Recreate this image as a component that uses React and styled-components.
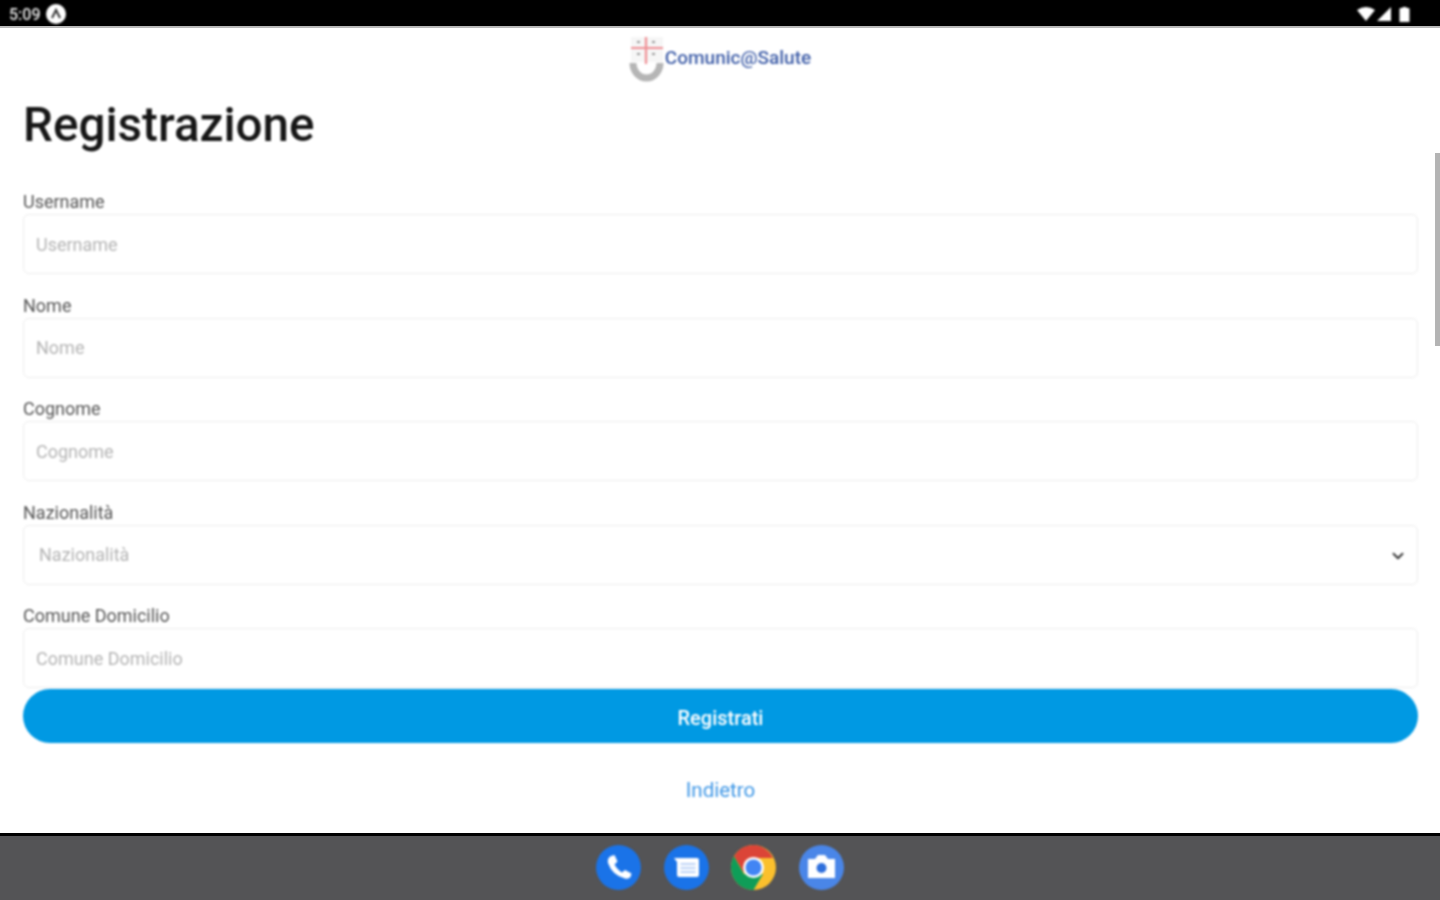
import React from 'react';
import styled, { createGlobalStyle, css } from 'styled-components';
import { ChevronDown } from 'lucide-react';

const GlobalStyle = createGlobalStyle`
  html, body {
    margin: 0;
    padding: 0;
    height: 100%;
    background: #fff;
    font-family: Roboto, "Liberation Sans", sans-serif;
    overflow: hidden;
  }
`;

// the reference is an upscaled low-res capture, everything in it is soft
const soft = css`
  filter: blur(0.8px);
`;

const Screen = styled.div`
  width: 1440px;
  height: 900px;
  display: flex;
  flex-direction: column;
  position: relative;
  overflow: hidden;
`;

const StatusBar = styled.div`
  height: 28px;
  flex: none;
  box-sizing: border-box;
  background: #000;
  border-bottom: 2px solid #b9b9b9;
  display: flex;
  align-items: center;
  justify-content: space-between;
  padding: 2px 30px 0 9px;
  color: #e8e8e8;
  font-size: 16px;
  font-weight: 500;
`;

const StatusLeft = styled.div`
  ${soft}
  display: flex;
  align-items: center;
  gap: 5px;
`;

const StatusRight = styled.div`
  ${soft}
  display: flex;
  align-items: center;
  gap: 2px;
`;

const Content = styled.main`
  ${soft}
  flex: 1;
  min-height: 0;
  display: flex;
  flex-direction: column;
  padding: 0 22px 0 23px;
`;

const LogoRow = styled.div`
  height: 58px;
  flex: none;
  display: flex;
  align-items: center;
  justify-content: center;
`;

const LogoImage = styled.svg`
  width: 38px;
  height: 46px;
  margin-top: 4px;
  margin-left: -2px;
`;

const LogoText = styled.span`
  font-size: 19px;
  font-weight: 500;
  color: #3f5ea8;
  margin-left: -1px;
`;

const Title = styled.h1`
  margin: 14px 0 0;
  height: 50px;
  line-height: 50px;
  font-size: 47.6px;
  font-weight: 500;
  color: #161616;
`;

const Fields = styled.div`
  flex: none;
  height: 539px;
  padding-top: 42px;
  box-sizing: border-box;
  overflow: hidden;
  display: flex;
  flex-direction: column;
  gap: 21.5px;
`;

const Field = styled.div`
  flex: none;
  display: flex;
  flex-direction: column;
`;

const Label = styled.label`
  height: 22px;
  line-height: 20px;
  font-size: 18px;
  color: #555;
`;

const InputBox = styled.div`
  height: 60px;
  box-sizing: border-box;
  border: 1.5px solid #ececec;
  border-radius: 6px;
  display: flex;
  align-items: center;
  justify-content: space-between;
  padding: 0 10px 0 ${(p) => (p.$select ? '15px' : '12px')};
  background: #fff;
  font-size: 18px;
  color: #b4b4b4;
`;

const SelectArrow = styled(ChevronDown)`
  margin-top: 3px;
`;

const SubmitButton = styled.button`
  flex: none;
  height: 54px;
  width: 100%;
  border: none;
  border-radius: 27px;
  padding: 3px 0 0;
  background: #0099e3;
  color: #fff;
  font-family: inherit;
  font-size: 20px;
  font-weight: 500;
`;

const BackLink = styled.a`
  flex: none;
  margin-top: 36px;
  text-align: center;
  font-size: 20.5px;
  line-height: 22px;
  color: #3f97e6;
`;

const Scrollbar = styled.div`
  position: absolute;
  top: 153px;
  right: 0;
  width: 5px;
  height: 193px;
  background: #b4b4b4;
`;

const Dock = styled.nav`
  height: 67px;
  flex: none;
  box-sizing: border-box;
  background: #545456;
  border-top: 3px solid #000;
  padding-bottom: 2px;
  display: flex;
  align-items: center;
  justify-content: center;
  gap: 22.5px;
`;

const DockIcon = styled.svg`
  ${soft}
  width: 45px;
  height: 45px;
  display: block;
`;

const BatteryIcon = styled.svg`
  width: 11px;
  height: 15px;
  margin-left: 5px;
`;

const Wifi = () => (
  <svg width="18" height="14" viewBox="0 0 18 14">
    <path d="M0 3 Q9 -3 18 3 L9 14 Z" fill="#fff" />
  </svg>
);

const Signal = () => (
  <svg width="15" height="14" viewBox="0 0 15 14">
    <path d="M0 14 L14 0 V14 Z" fill="#fff" />
  </svg>
);

const Battery = () => (
  <BatteryIcon viewBox="0 0 10 15">
    <path d="M3 0 H7 V1 H9 Q10 1 10 2 V15 H0 V2 Q0 1 1 1 H3 Z" fill="#fff" />
  </BatteryIcon>
);

const AccountBadge = () => (
  <svg width="20" height="20" viewBox="0 0 20 20">
    <circle cx="10" cy="10" r="10" fill="#fff" />
    <path d="M6 14 L10 6 L14 14" fill="none" stroke="#333" strokeWidth="2" />
  </svg>
);

const LogoMark = () => (
  <LogoImage viewBox="0 0 38 46">
    <path d="M3 1 H35 V26 H3 Z" fill="#f6f6f6" />
    <path d="M18 1 V28 M3 12 H35" stroke="#ef8e94" strokeWidth="2.2" fill="none" />
    <path d="M9 6 h3 M24 6 h3 M9 18 h3 M24 18 h3" stroke="#999" strokeWidth="2" fill="none" />
    <path d="M5 27 A13.5 15 0 0 0 32 27" stroke="#b5b5b5" strokeWidth="7" fill="none" />
  </LogoImage>
);

const PhoneIcon = () => (
  <DockIcon viewBox="0 0 45 45">
    <circle cx="22.5" cy="22.5" r="22.5" fill="#1a73e8" />
    <path
      d="M15 11 L18.5 10 L21.5 16.5 L18.5 19.5 Q21.5 25 26 27.5 L29 25 L35.5 28.5 L34.5 32 Q32.5 34.5 29 33.5 Q16.5 30.5 12 18 Q11 13 15 11 Z"
      fill="#fff"
    />
  </DockIcon>
);

const MessagesIcon = () => (
  <DockIcon viewBox="0 0 45 45">
    <circle cx="22.5" cy="22.5" r="22.5" fill="#1a73e8" />
    <path d="M10 13 H33 Q35 13 35 15 V30 Q35 32 33 32 H15 Q13 32 13 30 V17 Z" fill="#fff" />
    <path d="M16.5 19 H31.5 M16.5 23 H31.5 M16.5 27 H31.5" stroke="#bcd3f7" strokeWidth="2.2" fill="none" />
  </DockIcon>
);

const ChromeIcon = () => (
  <DockIcon viewBox="0 0 45 45">
    <circle cx="22.5" cy="22.5" r="22.5" fill="#fbc02d" />
    <path d="M22.5 0 A22.5 22.5 0 0 0 3 11.3 L13 28 L22.5 13 H42 A22.5 22.5 0 0 0 22.5 0 Z" fill="#db4437" />
    <path d="M3 11.3 A22.5 22.5 0 0 0 22.5 45 L32 29 H13 Z" fill="#0f9d58" />
    <circle cx="22.5" cy="22.5" r="10.5" fill="#fff" />
    <circle cx="22.5" cy="22.5" r="8" fill="#4285f4" />
  </DockIcon>
);

const CameraIcon = () => (
  <DockIcon viewBox="0 0 45 45">
    <circle cx="22.5" cy="22.5" r="22.5" fill="#4a86e8" />
    <path d="M9 14 H16 L19 10 H26 L29 14 H36 V33 H9 Z" fill="#fff" />
    <circle cx="22.5" cy="23" r="5" fill="#2f6fdc" />
  </DockIcon>
);

const fields = ['Username', 'Nome', 'Cognome', 'Nazionalità', 'Comune Domicilio'];

const App = () => {
  return (
    <>
      <GlobalStyle />
      <Screen>
        <StatusBar>
          <StatusLeft>
            <span>5:09</span>
            <AccountBadge />
          </StatusLeft>
          <StatusRight>
            <Wifi />
            <Signal />
            <Battery />
          </StatusRight>
        </StatusBar>
        <Content>
          <LogoRow>
            <LogoMark />
            <LogoText>Comunic@Salute</LogoText>
          </LogoRow>
          <Title>Registrazione</Title>
          <Fields>
            {fields.map((name) => (
              <Field key={name}>
                <Label>{name}</Label>
                <InputBox $select={name === 'Nazionalità'}>
                  {name}
                  {name === 'Nazionalità' && <SelectArrow size={18} color="#333" strokeWidth={2.5} />}
                </InputBox>
              </Field>
            ))}
          </Fields>
          <SubmitButton>Registrati</SubmitButton>
          <BackLink>Indietro</BackLink>
        </Content>
        <Scrollbar />
        <Dock>
          <PhoneIcon />
          <MessagesIcon />
          <ChromeIcon />
          <CameraIcon />
        </Dock>
      </Screen>
    </>
  );
};

export default App;
